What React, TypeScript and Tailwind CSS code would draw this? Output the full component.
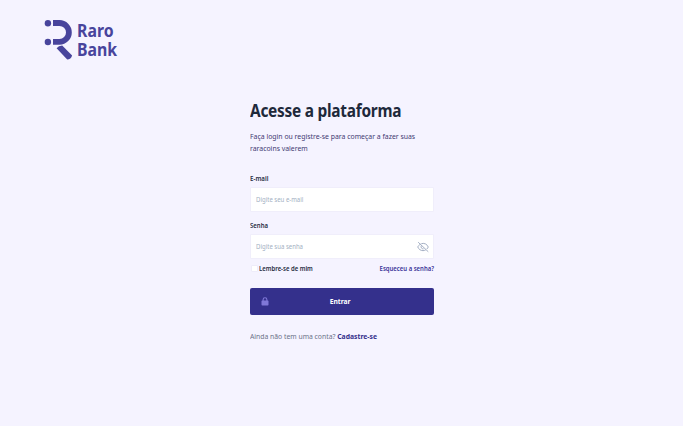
import React from "react";

function Logo() {
  return (
    <div className="flex h-[42px] items-start">
      <svg width="29" height="42" viewBox="0 0 29 42" fill="none" aria-hidden="true">
        <circle cx="3.9" cy="4.2" r="3.2" fill="#48449c" />
        <circle cx="3.9" cy="23" r="3.2" fill="#48449c" />
        <path d="M9 4H15.5A9.4 9.4 0 0 1 15.5 22.8H9" stroke="#48449c" strokeWidth="5.8" />
        <path d="M12.6 29.2Q14.5 26.6 18.2 26.6L28.1 36.4Q27 40.4 23.2 40.4Z" fill="#48449c" />
      </svg>
      <div className="ml-1 mt-[2px] origin-left scale-x-[0.88] text-[18px] font-bold leading-[19px] text-[#48449c]">
        Raro
        <br />
        Bank
      </div>
    </div>
  );
}

function EyeOff() {
  return (
    <svg width="12" height="12" viewBox="0 0 24 24" fill="none" stroke="#a3aec3" strokeWidth="2" strokeLinecap="round" aria-hidden="true">
      <path d="M3 3L22 21" />
      <path d="M6.5 6.5C4.2 7.8 2.5 9.8 1.5 12C3.5 16.5 7.4 19.3 12 19.3C13.8 19.3 15.5 18.9 17 18" />
      <path d="M9.5 5C15.5 3.5 20.5 7 22.5 12C22 13.3 21.2 14.5 20.2 15.5" />
      <path d="M8.5 9.5C6.8 12.5 9 16 12.4 15.8" />
    </svg>
  );
}

function Lock() {
  return (
    <svg width="8" height="9" viewBox="0 0 8 9" fill="none" aria-hidden="true">
      <path d="M2.1 4V2.7A1.9 1.9 0 0 1 5.9 2.7V4" stroke="#8078d8" strokeWidth="1.1" />
      <rect x="0.5" y="3.6" width="7" height="4.9" rx="0.8" fill="#8078d8" />
    </svg>
  );
}

export default function App() {
  return (
    <main className="h-[426px] w-[683px] overflow-hidden whitespace-nowrap bg-[#f5f3ff] pl-[44px] pt-[19px] font-['Noto_Sans',sans-serif] antialiased">
      <Logo />
      <section className="ml-[206px] mt-[37px] w-[184px]">
        <h1 className="h-6 w-max origin-left scale-x-[0.857] text-[18px] font-bold leading-6 tracking-[-0.3px] text-[#1e293b]">Acesse a plataforma</h1>
        <p className="mt-[8px] h-6 w-max origin-left scale-x-[0.883] text-[7.8px] leading-[12px] text-[#3f3a72]">
          Faça login ou registre-se para começar a fazer suas
          <br />
          raracoins valerem
        </p>
        <form onSubmit={(e) => e.preventDefault()}>
          <label className="mt-[19px] block h-3 w-max origin-left scale-x-[0.88] text-[7px] font-semibold leading-3 text-[#262c42]">E-mail</label>
          <div className="mt-[2px] flex h-[25px] items-center rounded-[1px] border border-[#f0eefb] bg-white pl-[5px] text-[7px] text-[#a3b0c2]">
            <span className="origin-left scale-x-[0.86] pt-[2px]">Digite seu e-mail</span>
          </div>
          <label className="mt-[8px] block h-3 w-max origin-left scale-x-[0.86] text-[7px] font-semibold leading-3 text-[#262c42]">Senha</label>
          <div className="mt-[2px] flex h-[25px] items-center justify-between rounded-[1px] border border-[#f0eefb] bg-white pl-[5px] pr-[4px] text-[7px] text-[#a3b0c2]">
            <span className="origin-left scale-x-[0.86] pt-[2px]">Digite sua senha</span>
            <EyeOff />
          </div>
          <div className="mt-[3px] flex h-3 items-center text-[7px] font-semibold">
            <span className="ml-px size-[7px] shrink-0 rounded-[1px] border border-[#eeecfa] bg-white" />
            <span className="ml-px origin-left scale-x-[0.85] pt-[2px] text-[#262c42]">Lembre-se de mim</span>
            <a className="ml-auto origin-right scale-x-[0.85] pt-[2px] text-[#3b3398]">Esqueceu a senha?</a>
          </div>
          <button className="mt-[14px] grid h-[27px] w-full grid-cols-[1fr_auto_1fr] items-center rounded-[2px] bg-[#34308c] pl-[11px] pr-[14px] text-[7.8px] font-bold text-white">
            <Lock />
            <span className="scale-x-[0.86] pt-px">Entrar</span>
          </button>
        </form>
        <p className="mt-[15px] h-3 w-max origin-left scale-x-[0.873] text-[7.8px] leading-3 text-[#6b7288]">
          Ainda não tem uma conta? <a className="font-bold text-[#34308c]">Cadastre-se</a>
        </p>
      </section>
    </main>
  );
}
